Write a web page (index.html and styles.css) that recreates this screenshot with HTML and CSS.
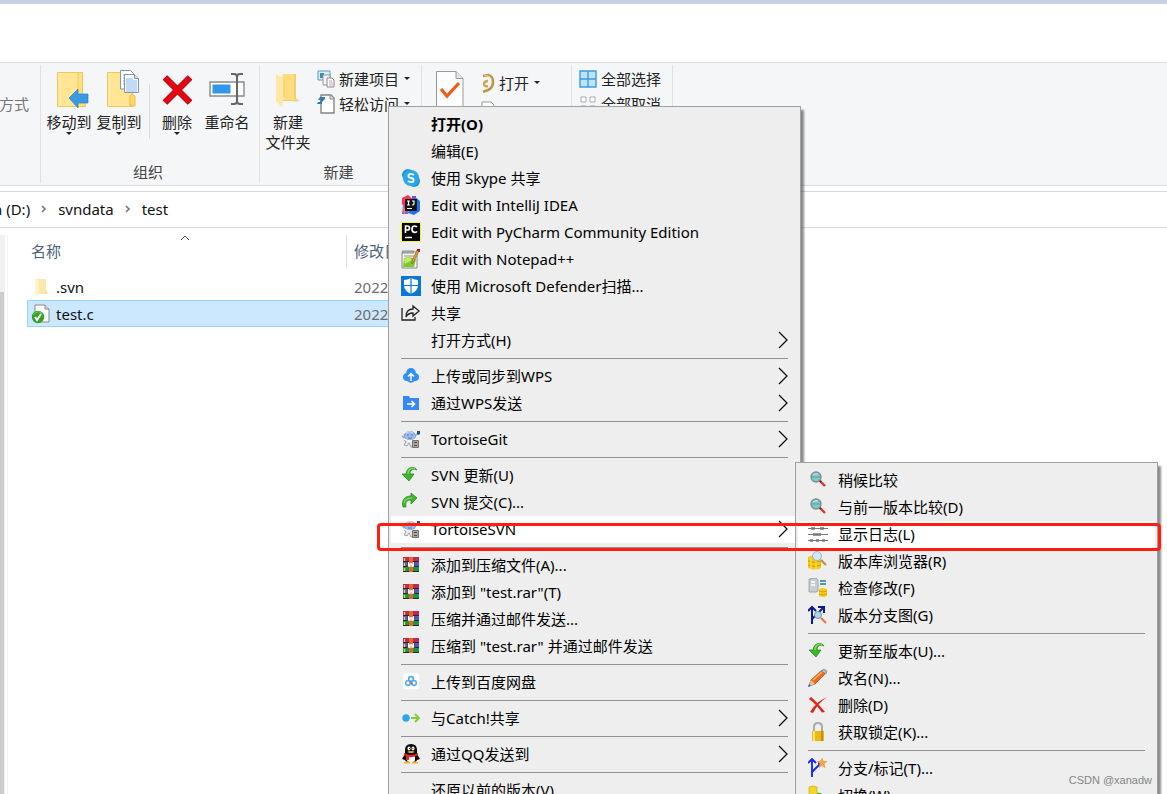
FILE: index.html
```html
<!DOCTYPE html>
<html lang="zh-CN">
  <head>
    <meta charset="UTF-8" />
    <meta name="viewport" content="width=device-width, initial-scale=1.0" />
    <title>test</title>
    <link rel="stylesheet" href="styles.css">
  </head>
  <body>
    <!-- ICONS USED MORE THAN ONCE -->
    <svg class="defs" width="0" height="0">
      <symbol id="i-caret" viewBox="0 0 6 3"><path d="M0 0h6L3 3z" fill="#222" /></symbol>
      <symbol id="i-more" viewBox="0 0 10 18"><path d="M1 1l8 8-8 8" fill="none" stroke="#111" stroke-width="1.3" /></symbol>
      <symbol id="i-crumb" viewBox="0 0 6 8"><path d="M1 1l3 3-3 3" fill="none" stroke="#777" stroke-width="1.6" /></symbol>
      <symbol id="i-tortoise" viewBox="0 0 20 20">
        <path d="M1 7l4 3M3 5l2 3M14 7l3-3" stroke="#a3a9b5" stroke-width="1.600" />
        <path d="M3 11l2 2-2 3 3 1 2-3 2 4h3v-6z" fill="#e6e6ea" stroke="#8f8f98" stroke-width=".8" />
        <ellipse cx="9" cy="7" rx="5.500" ry="4.500" fill="#9dbaf0" stroke="#8398c4" stroke-width=".8" />
        <path d="M6 6h2M10 6h2M7 9h4" stroke="#5a75b5" />
        <path d="M5 4q4-3 7 0" stroke="#d0defa" fill="none" />
        <path d="M3 10q6 4 12 0" fill="none" stroke="#fff" stroke-width="1.600" />
        <path d="M16 2h3v3l-2 1-1-1z" fill="#1f4f74" />
        <path d="M11.500 11.500h6v7h-6z" fill="#aaa6a2" stroke="#77736f" />
        <path d="M13 13.500h3M13 16.500h3" stroke="#4f4945" />
      </symbol>
      <symbol id="i-update" viewBox="0 0 20 20">
        <path d="M16 5C14 1 6 1 5 9H1l7 7 5-7H9c0-4 3-6 7-4z" fill="#3fb52c" stroke="#2c8a25" stroke-width=".8" />
        <path d="M14 4C11 2 7 4 7 9" stroke="#83de68" stroke-width="1.300" fill="none" />
      </symbol>
      <symbol id="i-rar" viewBox="0 0 20 20">
        <path d="M2 2h16v5H2z" fill="#c02656" /><path d="M2 7h16v5H2z" fill="#5558c4" /><path d="M2 12h16v5H2z" fill="#149a3d" />
        <path d="M2 6.500h16M2 11.500h16M2 16.500h16" stroke="#2a2434" />
        <path d="M3.500 3v3M3.500 8v3M3.500 13v3" stroke="#f1d53a" stroke-width="1.300" />
        <path d="M8 2h4v15H8z" fill="#e2682a" /><path d="M6 7h2v5H6zM12 7h2v5h-2z" fill="#3b2a35" />
        <path d="M7.500 7v4h1.500V9h2v2h1.500V7" fill="none" stroke="#fff" stroke-width="1.300" />
      </symbol>
      <symbol id="i-mag" viewBox="0 0 20 20">
        <path d="M12 11l5 5" stroke="#e33423" stroke-width="2.400" /><path d="M11 10l2 2" stroke="#4a3434" stroke-width="2" />
        <circle cx="8" cy="7" r="5" fill="#80c8cb" stroke="#808c8e" stroke-width="1.400" /><path d="M4 7h8" stroke="#57a0a5" /><path d="M5 5q2-2 5-1" stroke="#cdeeee" fill="none" />
      </symbol>
    </svg>

    <header class="titlebar"></header>

    <!-- RIBBON -->
    <nav class="ribbon">
      <section class="group group-cut"><span>方式</span></section>

      <section class="group group-organize">
        <div class="tools">
          <button class="big">
            <svg width="42" height="38" viewBox="-8 0 42 38">
              <path d="M1.500 2.500h25v34h-25z" fill="#ffe594" stroke="#efc85a" /><path d="M22 2.500h4.500V28l2-2 1 10.500H22z" fill="#ffdf80" stroke="#efc85a" /><path d="M4 3v33" stroke="#fff0bb" />
              <path d="M13 28l9-9v5h10v9H22v5z" fill="#3a9be4" stroke="#2385cf" stroke-width=".7" />
            </svg>
            <span>移动到</span><svg class="caret"><use href="#i-caret" /></svg>
          </button>
          <button class="big">
            <svg width="42" height="38" viewBox="-8 0 42 38">
              <path d="M1.500 2.500h25v34h-25z" fill="#ffe594" stroke="#efc85a" /><path d="M24 26l2-2 3 2v10h-5z" fill="#ffd46b" stroke="#efbd47" /><path d="M4 3v33" stroke="#fff0bb" />
              <path d="M14.500.500h10l3 3V19h-13z" fill="#fff" stroke="#8496af" /><path d="M17 5h5M17 8h3M17 11h2M17 14h2" stroke="#78a6e4" />
              <path d="M18.500 4.500h10l4 4v14h-14z" fill="#f8fbff" stroke="#8496af" /><path d="M28.500 4.500v4h4" fill="#ddd" stroke="#8496af" /><path d="M20 9h7M20 11h11M20 13h11M20 15h11M20 17h11M20 19h11M20 21h11" stroke="#8bb8f4" />
            </svg>
            <span>复制到</span><svg class="caret"><use href="#i-caret" /></svg>
          </button>
          <i class="tool-line"></i>
          <button class="big">
            <svg width="34" height="38" viewBox="0 0 34 38"><path d="M5 7l25 25M30 7L5 32" transform="translate(0 .5)" stroke="#b8000e" stroke-width="6.500" /><path d="M5 7l25 25M30 7L5 32" transform="translate(0 .5)" stroke="#e30613" stroke-width="5" /></svg>
            <span>删除</span><svg class="caret"><use href="#i-caret" /></svg>
          </button>
          <button class="big">
            <svg width="36" height="38" viewBox="0 0 36 38"><path d="M1 12h34v14H1z" fill="#fff" stroke="#8b8b8b" stroke-width="1.400" /><path d="M3.500 14.500h18v9h-18z" fill="#2f98ea" /><path d="M22 4h3q3 0 3 3v24q0 3-3 3h-3M34 4h-3q-3 0-3 3v24q0 3 3 3h3" fill="none" stroke="#666" stroke-width="2" /></svg>
            <span>重命名</span>
          </button>
        </div>
        <h2>组织</h2>
      </section>

      <section class="group group-new">
        <div class="tools">
          <button class="big">
            <svg width="34" height="38" viewBox="0 0 34 38">
              <path d="M12 4h13v24l3 3H9z" fill="#efcf76" /><path d="M12 4h11v26H9z" fill="#ffdc7e" /><path d="M5 4l8 5v18l-2 10-6-5z" fill="#ffe8a7" /><path d="M13 9v18" stroke="#f2c85c" /><path d="M25 29l4 2-7 1" fill="#e8d59c" />
            </svg>
            <span>新建<br>文件夹</span>
          </button>
          <div class="small-tools">
            <button class="small">
              <svg width="18" height="18" viewBox="0 0 18 18"><path d="M1 1h12v9H1z" fill="#d4effb" stroke="#5b9bb5" /><path d="M3 3h4v5H3z" fill="#3e8ca9" /><path d="M6 5h7v10H6z" fill="#f3f3f3" stroke="#999" /><path d="M10 8h5l2 2v7h-7z" fill="#fff" stroke="#888" /><path d="M12 11h3M12 13h4M12 15h4" stroke="#caa1a3" /></svg>
              <span>新建项目</span><svg class="caret"><use href="#i-caret" /></svg>
            </button>
            <button class="small">
              <svg width="18" height="20" viewBox="0 0 18 20"><path d="M4 1h10l3 3v15H4z" fill="#fff" stroke="#858585" stroke-width="1.400" /><path d="M13 1v4h4" fill="#ddd" stroke="#888" /><path d="M3 3h5v2L5 8v2H0l1-2h2l1-2H1z" fill="#2e7bb5" /></svg>
              <span>轻松访问</span><svg class="caret"><use href="#i-caret" /></svg>
            </button>
          </div>
        </div>
        <h2>新建</h2>
      </section>

      <section class="group group-open">
        <div class="tools">
          <button class="big" aria-label="属性">
            <svg width="30" height="38" viewBox="0 0 30 38"><path d="M1.500 1.500H21l7 7v29H1.500z" fill="#fdfdfd" stroke="#999" /><path d="M21 1.500v7h7" fill="#e4e4e4" stroke="#999" /><path d="M6 19l6 7L24 13" fill="none" stroke="#f05a1a" stroke-width="3.200" /></svg>
          </button>
          <div class="small-tools">
            <button class="small">
              <svg width="14" height="20" viewBox="0 0 14 20"><path d="M2 3l5-1q5 1 5 7t-5 8l-5 2" fill="none" stroke="#b99746" stroke-width="2.600" /><path d="M7 8q-4 0-4 3t4 2" fill="none" stroke="#c9a957" stroke-width="2.400" /><path d="M3 2l5 1q3 2 3 6" fill="none" stroke="#e3cd8d" /></svg>
              <span>打开</span><svg class="caret"><use href="#i-caret" /></svg>
            </button>
            <button class="small" aria-label="编辑">
              <svg width="14" height="14" viewBox="0 0 14 14"><path d="M1 1h9l3 3v10H1z" fill="#fff" stroke="#999" /></svg>
            </button>
          </div>
        </div>
      </section>

      <section class="group group-select">
        <div class="small-tools">
          <button class="small">
            <svg width="18" height="18" viewBox="0 0 18 18"><path d="M1 1h16v16H1zM9 1v16M1 9h16" fill="#bfe3fb" stroke="#3c9be5" stroke-width="1.400" /></svg>
            <span>全部选择</span>
          </button>
          <button class="small">
            <svg width="18" height="18" viewBox="0 0 18 18"><path d="M2 2h5v5H2zM11 2h5v5h-5zM2 11h5v5H2zM11 11h5v5h-5z" fill="#fff" stroke="#aaa" /></svg>
            <span>全部取消</span>
          </button>
        </div>
      </section>
    </nav>

    <!-- ADDRESS BAR -->
    <nav class="address">
      <a class="drive" href="#">n (D:)</a>
      <svg width="6" height="8"><use href="#i-crumb" /></svg>
      <a href="#">svndata</a>
      <svg width="6" height="8"><use href="#i-crumb" /></svg>
      <a href="#">test</a>
    </nav>

    <!-- FILE LIST -->
    <main class="files">
      <div class="scrollbar"><div class="thumb"></div></div>
      <table>
        <thead>
          <tr>
            <th class="col-name"><span class="head">名称<svg width="10" height="6" viewBox="0 0 10 6"><path d="M1 5l4-4 4 4" fill="none" stroke="#555" /></svg></span></th>
            <th class="col-date"><span class="head">修改日期</span></th>
          </tr>
        </thead>
        <tbody>
          <tr>
            <td><span class="file"><svg width="20" height="20" viewBox="0 0 20 20"><path d="M4 2h11v15H6z" fill="#fbe7ab" /><path d="M4 2l4 2v12l-2 3-2-2z" fill="#fff2cd" /><path d="M15 12l2 5h-5" fill="#f8e3a4" /></svg>.svn</span></td>
            <td>2022/3/8 10:24</td>
          </tr>
          <tr class="selected">
            <td><span class="file"><svg width="20" height="20" viewBox="0 0 20 20"><path d="M4 1h10l4 4v13H4z" fill="#fff" stroke="#888" /><path d="M14 1v4h4" fill="#ddd" stroke="#888" /><circle cx="7" cy="13" r="6.200" fill="#32a321" /><path d="M2 11q4-5 9-2" fill="none" stroke="#77cc68" /><path d="M4 13l2 3 4-6" stroke="#fff" stroke-width="2" fill="none" /></svg>test.c</span></td>
            <td>2022/3/8 10:24</td>
          </tr>
        </tbody>
      </table>
    </main>

    <!-- CONTEXT MENU -->
    <div class="menu menu-main">
      <button class="item default"><span>打开(O)</span></button>
      <button class="item"><span>编辑(E)</span></button>
      <button class="item">
        <svg class="icon" viewBox="0 0 20 20"><circle cx="7" cy="7" r="6" fill="#2195d7" /><circle cx="13" cy="13" r="6" fill="#2195d7" /><circle cx="10" cy="10" r="8" fill="#28a8ea" /><path d="M13 7.200q-1-1.400-3-1.400-2.600 0-2.600 2T10 10t2.600 2.200-2.600 2q-2 0-3-1.400" fill="none" stroke="#fff" stroke-width="1.800" /></svg>
        <span>使用 Skype 共享</span>
      </button>
      <button class="item">
        <svg class="icon" viewBox="0 0 20 20"><path d="M1 3l6-3 6 5-7 10-5-6z" fill="#fc2f65" /><path d="M1 19l1-9 6 3-1 6z" fill="#a55bc1" /><path d="M2 12l3 3-2 4z" fill="#f68a3c" /><path d="M13 1l6 5v10l-6 4-6-2z" fill="#1878f4" /><path d="M11 1h4v4h-4z" fill="#7354d9" /><path d="M4 4h12v12H4z" fill="#111" /><path d="M6 6h3M7.500 6v4M6 10h3M11 6h2v3q0 1-2 1M6 13.500h5" fill="none" stroke="#fff" stroke-width="1.200" /></svg>
        <span>Edit with IntelliJ IDEA</span>
      </button>
      <button class="item">
        <svg class="icon" viewBox="0 0 20 20"><path d="M.500.500h19v19H.500z" fill="#050505" stroke="#eaf436" /><path d="M4.500 11V4h2q2 0 2 2t-2 2h-2M16 5q-1-1-2.500-1Q11 4 11 7.200t3 3.200q1.400 0 2-1M4 15.500h7" fill="none" stroke="#fff" stroke-width="1.700" /></svg>
        <span>Edit with PyCharm Community Edition</span>
      </button>
      <button class="item">
        <svg class="icon" viewBox="0 0 20 20"><path d="M1 3h15v16H1z" fill="#f5f6ef" stroke="#888" /><path d="M2 18l1-9 5-1 7 2-2 8z" fill="#78c832" /><path d="M3 10l5-2 3 3-7 4z" fill="#c7e960" /><path d="M2 1v4M4 1v4M6 1v4M8 1v4M10 1v4M12 1v4M3 7h10" stroke="#777" stroke-width=".8" /><path d="M18 2l-6 12-1 1v-3l5-11z" fill="#e9a037" stroke="#795d31" stroke-width=".6" /><path d="M16 0h3v3l-3-1z" fill="#a51420" /></svg>
        <span>Edit with Notepad++</span>
      </button>
      <button class="item">
        <svg class="icon" viewBox="0 0 20 20"><path d="M0 0h20v20H0z" fill="#0878d7" /><path d="M10 2q4 2 7 2v5q0 6-7 9-7-3-7-9V4q3 0 7-2z" fill="#fff" /><path d="M10 2v17M3 9.500h14" stroke="#0878d7" stroke-width="1.200" /></svg>
        <span>使用 Microsoft Defender扫描...</span>
      </button>
      <button class="item">
        <svg class="icon" viewBox="0 0 20 20"><path d="M1 5v12h13v-3" fill="none" stroke="#222" stroke-width="1.300" /><path d="M12 3l6 5-6 5v-3q-5 0-7 4 0-8 7-8z" fill="none" stroke="#222" stroke-width="1.300" /></svg>
        <span>共享</span>
      </button>
      <button class="item"><span>打开方式(H)</span><svg class="more"><use href="#i-more" /></svg></button>
      <hr>
      <button class="item">
        <svg class="icon" viewBox="0 0 20 20"><path d="M6 15q-4 0-4-4 0-3 3-4 1-5 5-5t5 5q3 1 3 4 0 4-4 4l-4 2z" fill="#338dfa" /><path d="M10 15V8M7 10.500l3-3 3 3" fill="none" stroke="#fff" stroke-width="1.500" /></svg>
        <span>上传或同步到WPS</span><svg class="more"><use href="#i-more" /></svg>
      </button>
      <button class="item">
        <svg class="icon" viewBox="0 0 20 20"><path d="M2 3h6l1 2h9v12H2z" fill="#3887f8" /><path d="M6 11h7M10.500 8l3 3-3 3" fill="none" stroke="#fff" stroke-width="1.600" /></svg>
        <span>通过WPS发送</span><svg class="more"><use href="#i-more" /></svg>
      </button>
      <hr>
      <button class="item"><svg class="icon"><use href="#i-tortoise" /></svg><span>TortoiseGit</span><svg class="more"><use href="#i-more" /></svg></button>
      <hr>
      <button class="item"><svg class="icon"><use href="#i-update" /></svg><span>SVN 更新(U)</span></button>
      <button class="item">
        <svg class="icon" viewBox="0 0 20 20"><path d="M2 15C0 8 4 4 10 4V1l6 5-6 6V8C6 8 4 10 5 15z" fill="#3fb52c" stroke="#2c8a25" stroke-width=".8" /><path d="M3 11q1-5 8-5" fill="none" stroke="#83de68" stroke-width="1.200" /></svg>
        <span>SVN 提交(C)...</span>
      </button>
      <button class="item active"><svg class="icon"><use href="#i-tortoise" /></svg><span>TortoiseSVN</span><svg class="more"><use href="#i-more" /></svg></button>
      <hr>
      <button class="item"><svg class="icon"><use href="#i-rar" /></svg><span>添加到压缩文件(A)...</span></button>
      <button class="item"><svg class="icon"><use href="#i-rar" /></svg><span>添加到 "test.rar"(T)</span></button>
      <button class="item"><svg class="icon"><use href="#i-rar" /></svg><span>压缩并通过邮件发送...</span></button>
      <button class="item"><svg class="icon"><use href="#i-rar" /></svg><span>压缩到 "test.rar" 并通过邮件发送</span></button>
      <hr>
      <button class="item">
        <svg class="icon" viewBox="0 0 20 20"><rect x="2" y="1" width="16" height="16" rx="3" fill="#fff" /><g fill="none" stroke-width="1.700"><circle cx="7" cy="11" r="2.300" stroke="#4bb7ee" /><circle cx="13" cy="11" r="2.300" stroke="#4bb7ee" /><circle cx="10" cy="7" r="2.300" stroke="#51a9e8" /><path d="M8.500 9.500l3 3" stroke="#ee5e6b" /></g></svg>
        <span>上传到百度网盘</span>
      </button>
      <hr>
      <button class="item">
        <svg class="icon" viewBox="0 0 20 20"><circle cx="5" cy="10" r="3.700" fill="#28a8ea" /><path d="M10 10h7M14 6l4 4-4 4" fill="none" stroke="#8acb35" stroke-width="2" /></svg>
        <span>与Catch!共享</span><svg class="more"><use href="#i-more" /></svg>
      </button>
      <hr>
      <button class="item">
        <svg class="icon" viewBox="0 0 20 20"><path d="M4 10V6q0-6 6-6t6 6v4l3 5-3 1q-1 3-6 3t-6-3l-3-1z" fill="#080808" /><path d="M6 12h8v4q-1 3-4 3t-4-3z" fill="#fff" /><ellipse cx="8" cy="4.500" rx="1.500" ry="2" fill="#fff" /><ellipse cx="12" cy="4.500" rx="1.500" ry="2" fill="#fff" /><path d="M8 4.500h.8M11.500 4.500h.8" stroke="#000" /><path d="M6 8q4-2 8 0-4 2-8 0zM3 18l5-1 1 2.500H3zM17 18l-5-1-1 2.500h6z" fill="#f6b022" /><path d="M3 9q7 4 14 0v2q-5 3-9 2v3H5v-4l-2-1z" fill="#e5272b" /></svg>
        <span>通过QQ发送到</span><svg class="more"><use href="#i-more" /></svg>
      </button>
      <hr>
      <button class="item"><span>还原以前的版本(V)</span></button>
    </div>

    <!-- TORTOISESVN SUBMENU -->
    <div class="menu menu-sub">
      <button class="item"><svg class="icon"><use href="#i-mag" /></svg><span>稍候比较</span></button>
      <button class="item"><svg class="icon"><use href="#i-mag" /></svg><span>与前一版本比较(D)</span></button>
      <button class="item active">
        <svg class="icon" viewBox="0 0 20 20"><path d="M0 4.500h20M0 10.500h20M0 16.500h20" stroke="#777" /><path d="M3 4.500h4M12 4.500h4M5 10.500h8M2 16.500h3M8 16.500h3M14 16.500h3" stroke="#777" stroke-width="2.600" /></svg>
        <span>显示日志(L)</span>
      </button>
      <button class="item">
        <svg class="icon" viewBox="0 0 20 20"><path d="M0 6q6-3 13 0v11q-6 3-13 0z" fill="#f3c912" /><path d="M0 10q6 3 13 0M0 14q6 3 13 0" fill="none" stroke="#c89b08" /><path d="M3 7v11M8 7v11" stroke="#ffe873" /><path d="M13 9l5 5" stroke="#c48c53" stroke-width="2.200" /><circle cx="9" cy="5" r="4.500" fill="#d2e6fa" stroke="#a4b3c4" /></svg>
        <span>版本库浏览器(R)</span>
      </button>
      <button class="item">
        <svg class="icon" viewBox="0 0 20 20"><path d="M1 1l7-1 2 2v11l-2 1H1z" fill="#c8cdd1" stroke="#939a9e" stroke-width=".8" /><path d="M3 4h4M3 7h4" stroke="#fff" stroke-width="1.500" /><path d="M12 3h6M12 6h6" stroke="#247895" stroke-width="1.700" /><path d="M11 11q4-2 8 0v7q-4 2-8 0z" fill="#f6cd1a" /><path d="M11 13q4 2 8 0M11 16q4 2 8 0" stroke="#d19f0a" fill="none" /></svg>
        <span>检查修改(F)</span>
      </button>
      <button class="item">
        <svg class="icon" viewBox="0 0 20 20"><path d="M4 19V2M0 6l4-4 4 4M4 14L15 3M10 2h6v6" fill="none" stroke="#0a1c8b" stroke-width="2" /><circle cx="10" cy="10" r="3.500" fill="#aad7f0" stroke="#8090a0" /><path d="M13 13l5 5" stroke="#e87852" stroke-width="2.200" /></svg>
        <span>版本分支图(G)</span>
      </button>
      <hr>
      <button class="item"><svg class="icon"><use href="#i-update" /></svg><span>更新至版本(U)...</span></button>
      <button class="item">
        <svg class="icon" viewBox="0 0 20 20"><path d="M1 18l2-6L14 2l4 3L7 16z" fill="#ed6c1f" stroke="#a94715" stroke-width=".7" /><path d="M5 12l9-8" stroke="#ffb255" stroke-width="1.500" /><path d="M13 3l3-2 3 2-1 3z" fill="#b7b7b7" stroke="#777" stroke-width=".6" /><path d="M3 12l4 4-6 2z" fill="#e8c397" /><path d="M1 16l2 2-3 1z" fill="#2464cb" /></svg>
        <span>改名(N)...</span>
      </button>
      <button class="item">
        <svg class="icon" viewBox="0 0 20 20"><path d="M3 2q5 4 14 15l-3 .500Q8 9 1 4zM19 2Q10 8 5 18l-3-1Q8 7 19 2z" fill="#df2314" /></svg>
        <span>删除(D)</span>
      </button>
      <button class="item">
        <svg class="icon" viewBox="0 0 20 20"><path d="M6 10V5q0-4 4-4t4 4v5" fill="none" stroke="#aaa" stroke-width="2" /><path d="M4 9h12v10H4z" fill="#e9b91c" /><path d="M6 9v10" stroke="#ffe36c" stroke-width="2" /><path d="M14 9v10" stroke="#c58c0e" stroke-width="2" /></svg>
        <span>获取锁定(K)...</span>
      </button>
      <hr>
      <button class="item">
        <svg class="icon" viewBox="0 0 20 20"><path d="M4 19V1M0 5l4-4 4 4M4 14l7-7V4" fill="none" stroke="#152cf0" stroke-width="1.900" /><path d="M14 0l1 3 4 .500-3 2 1 4-3-2-3 2 1-4-3-2 4-.500z" fill="#f7a54a" stroke="#e98735" stroke-width=".5" /></svg>
        <span>分支/标记(T)...</span>
      </button>
      <button class="item">
        <svg class="icon" viewBox="0 0 20 20"><path d="M1 2q4-2 8 0v9q-4 2-8 0z" fill="#f3d523" stroke="#d0ac18" stroke-width=".7" /><path d="M9 8q6-1 6 4h3l-4 4-4-4h2q0-2-3-2z" fill="#3fb52c" /><path d="M8 13h8v6H8z" fill="#f3d523" /></svg>
        <span>切换(W)...</span>
      </button>
    </div>

    <div class="highlight-box"></div>
    <div class="watermark">CSDN @xanadw</div>
  </body>
</html>
```
FILE: styles.css
```css
/* Global Styles */
* {
  box-sizing: border-box;
}
body {
  margin: 0;
  height: 100vh;
  display: flex;
  flex-direction: column;
  position: relative;
  overflow: hidden;
  background: #fff;
  color: #111;
  font-family: "Noto Sans", "Noto Sans CJK SC", sans-serif;
  font-size: 15px;
  line-height: 20px;
}
button {
  border: none;
  background: none;
  padding: 0;
  font: inherit;
  color: inherit;
}
a {
  color: inherit;
  text-decoration: none;
}
svg {
  flex: none;
}
.defs {
  position: absolute;
}

.titlebar {
  height: 62px;
  flex: none;
  border-top: 4px solid #c8d1e3;
}

/* RIBBON */
.ribbon {
  display: flex;
  flex: none;
  height: 124px;
  padding: 2px 0;
  background: #f5f6f7;
  border-top: 1px solid #dadbdc;
  border-bottom: 1px solid #dadbdc;
  color: #222;
}
.group {
  display: flex;
  flex-direction: column;
  justify-content: space-between;
  border-right: 1px solid #e0e1e3;
  white-space: nowrap;
}
.group h2 {
  margin: 0;
  padding: 0 4px 1px 0;
  font-size: 15px;
  font-weight: normal;
  line-height: 20px;
  text-align: center;
  color: #444;
}
.group-cut {
  width: 41px;
  padding: 29px 11px 0 0;
  align-items: flex-end;
  justify-content: flex-start;
  color: #777;
}
.group-organize {
  width: 219px;
}
.group-new {
  width: 162px;
}
.group-open {
  width: 150px;
}
.group-select {
  width: 101px;
  padding-left: 7px;
}
.tools {
  display: flex;
}
.big {
  display: flex;
  flex-direction: column;
  align-items: center;
  width: 50px;
  margin-left: 3px;
  padding-top: 5px;
}
.big + .big {
  margin-left: 0;
}
.big span {
  margin-top: 4px;
}
.caret {
  width: 6px;
  height: 3px;
}
.tool-line {
  width: 1px;
  height: 55px;
  margin: 19px 0 0 5px;
  background: #dcdde0;
}
.tool-line + .big {
  margin-left: 2px;
}
.small-tools {
  display: flex;
  flex-direction: column;
  padding-top: 1px;
}
.small {
  display: flex;
  align-items: center;
  gap: 4px;
  height: 25px;
}
.small .caret {
  margin-left: 1px;
}
.group-new .small-tools {
  margin-left: 4px;
}
.group-open .big {
  width: 30px;
  margin-left: 13px;
}
.group-open .small-tools {
  margin-left: 16px;
  padding-top: 5px;
}

/* ADDRESS BAR */
.address {
  display: flex;
  flex: none;
  align-items: center;
  gap: 11px;
  height: 37px;
  margin-top: 5px;
  padding-bottom: 2px;
  border-top: 1px solid #d9d9d9;
  border-bottom: 1px solid #d9d9d9;
}
.drive {
  margin-left: -7px;
}

/* FILE LIST */
.files {
  display: flex;
  flex: 1;
  padding-top: 7px;
}
.scrollbar {
  width: 8px;
  flex: none;
  padding: 57px 3px 0 0;
  background: linear-gradient(to right, #f0f0f0 5px, #fff 5px, #fff 7px, #f2f2f2 7px);
}
.thumb {
  width: 4px;
  height: 100%;
  background: #cdcdcd;
}
.files table {
  align-self: flex-start;
  margin-left: 19px;
  border-spacing: 0;
  table-layout: fixed;
  width: 320px;
}
.files th {
  height: 38px;
  padding: 0;
  font-weight: normal;
  text-align: left;
  vertical-align: top;
  color: #4c607a;
}
.files th,
.files td {
  overflow: hidden;
  white-space: nowrap;
}
.files table {
  width: 500px;
}
.col-name {
  width: 320px;
}
.head {
  display: flex;
  gap: 119px;
  height: 32px;
  padding: 6px 0 0 4px;
  border-right: 1px solid #e2e2e2;
}
.col-date .head {
  padding-left: 7px;
}
.head svg {
  margin-top: -6px;
}
.files td {
  height: 27px;
  padding: 0 0 0 7px;
  color: #6d6d6d;
}
.files td:first-child {
  padding-left: 4px;
  color: #111;
}
.file {
  display: flex;
  align-items: center;
  gap: 5px;
}
.selected td {
  background: #cce8ff;
  border-top: 1px solid #99d1ff;
  border-bottom: 1px solid #99d1ff;
}
.selected td:first-child {
  padding-left: 3px;
  border-left: 1px solid #99d1ff;
}

/* CONTEXT MENUS */
.menu {
  position: absolute;
  display: flex;
  flex-direction: column;
  padding: 4px 2px;
  background: #eee;
  border: 1px solid #a0a0a0;
  box-shadow: 3px 4px 2px rgba(0, 0, 0, 0.45);
  color: #000;
}
.menu-main {
  left: 388px;
  top: 106px;
  width: 413px;
}
.menu-sub {
  left: 795px;
  top: 462px;
  width: 363px;
}
.item {
  display: flex;
  align-items: center;
  flex: none;
  height: 27px;
  padding: 0 10px 2px;
  text-align: left;
  white-space: nowrap;
}
.item > span {
  flex: 1;
  margin-left: 10px;
}
.item > span:first-child {
  margin-left: 30px;
}
.item.default {
  font-weight: bold;
}
.item.active {
  background: #fff;
}
.icon {
  width: 20px;
  height: 20px;
}
.more {
  width: 10px;
  height: 18px;
}
.menu hr {
  width: calc(100% - 20px);
  margin: 4px 10px;
  border: none;
  border-top: 1px solid #919191;
}

/* OVERLAYS */
.highlight-box {
  position: absolute;
  left: 377px;
  top: 523px;
  width: 784px;
  height: 28px;
  border: 3px solid #ff1e10;
  border-radius: 4px;
}
.watermark {
  position: absolute;
  right: 15px;
  bottom: 6px;
  font: 11px/16px "Liberation Sans", Arial, sans-serif;
  color: #858585;
}
```
